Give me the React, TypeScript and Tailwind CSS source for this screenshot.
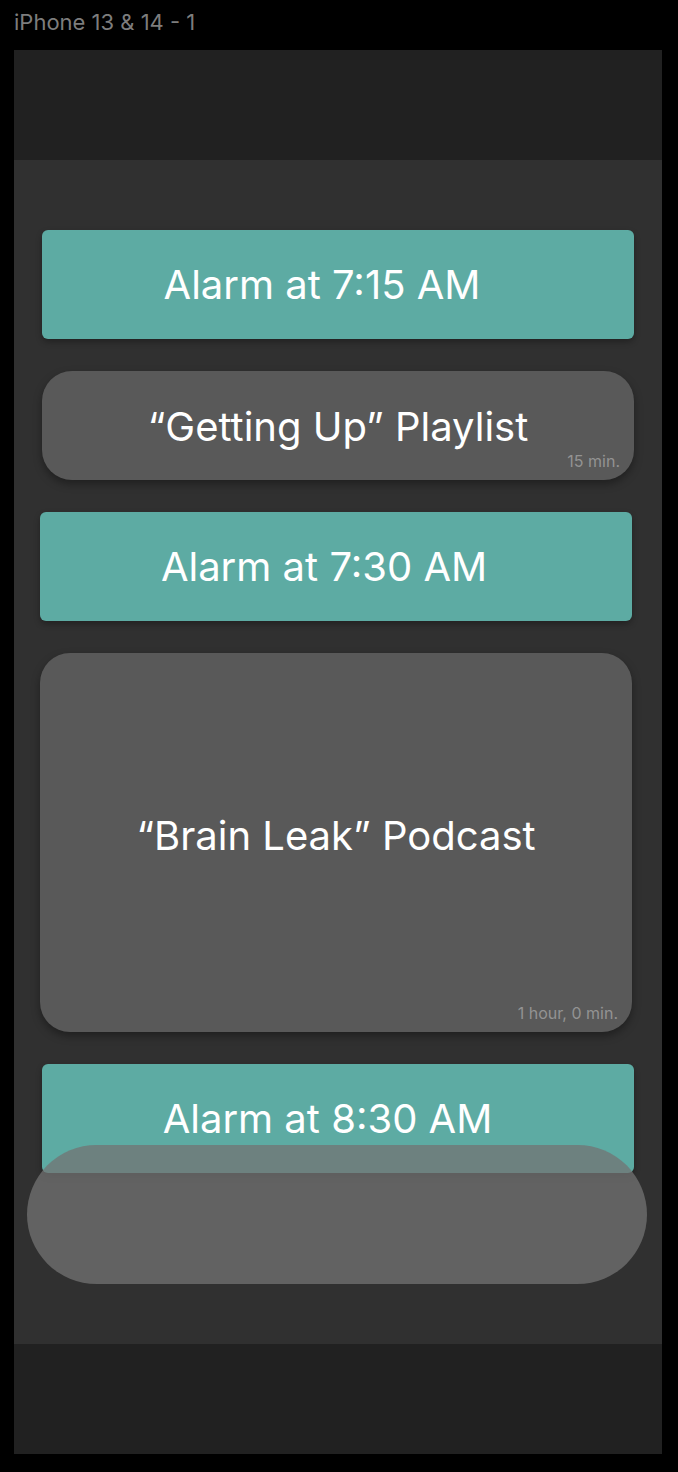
import React from "react";

type Item =
  | { kind: "alarm"; label: string; shift: string; pad: string }
  | { kind: "media"; label: string; length: string; tall?: boolean; shift: string };

const items: Item[] = [
  { kind: "alarm", label: "Alarm at 7:15 AM", shift: "ml-[28px]", pad: "pr-[32px]" },
  { kind: "media", label: "\u201cGetting Up\u201d Playlist", length: "15 min.", shift: "ml-[28px]" },
  { kind: "alarm", label: "Alarm at 7:30 AM", shift: "ml-[26px]", pad: "pr-[24px]" },
  { kind: "media", label: "\u201cBrain Leak\u201d Podcast", length: "1 hour, 0 min.", tall: true, shift: "ml-[26px]" },
  { kind: "alarm", label: "Alarm at 8:30 AM", shift: "ml-[28px]", pad: "pr-[21px]" },
];

const App: React.FC = () => {
  return (
    <div className="min-h-screen w-full bg-black font-['Inter','Noto_Sans',sans-serif] px-[14px]">
      <p className="pt-[8px] h-[50px] text-[22px] leading-[28px] text-[#7d7d7d]">iPhone 13 &amp; 14 - 1</p>
      <div className="w-[648px] flex flex-col">
        <div className="h-[110px] bg-[#212121]"></div>
        <div className="relative h-[1184px] bg-[#303030] pt-[70px] flex flex-col gap-[32px]">
          {items.map((item, i) =>
            item.kind === "alarm" ? (
              <div
                key={i}
                className={`${item.shift} ${item.pad} w-[592px] h-[109px] rounded-[6px] bg-[#5daba3] shadow-[0_3px_6px_rgba(0,0,0,0.3)] flex items-center justify-center`}
              >
                <span className="text-[40px] leading-[48px] text-white">{item.label}</span>
              </div>
            ) : (
              <div
                key={i}
                className={`${item.shift} relative w-[592px] ${item.tall ? "h-[379px] pb-[14px]" : "h-[109px] pt-[2px]"} rounded-[30px] bg-[#595959] shadow-[0_4px_8px_rgba(0,0,0,0.35)] flex items-center justify-center`}
              >
                <span className="text-[40px] leading-[48px] text-white">{item.label}</span>
                <span className="absolute right-[14px] bottom-[9px] text-[16px] leading-[20px] text-[#939393]">
                  {item.length}
                </span>
              </div>
            )
          )}
          <div className="absolute left-[13px] top-[985px] w-[620px] h-[139px] rounded-full bg-[#737373]/75"></div>
        </div>
        <div className="h-[110px] bg-[#212121]"></div>
      </div>
    </div>
  );
};

export default App;
